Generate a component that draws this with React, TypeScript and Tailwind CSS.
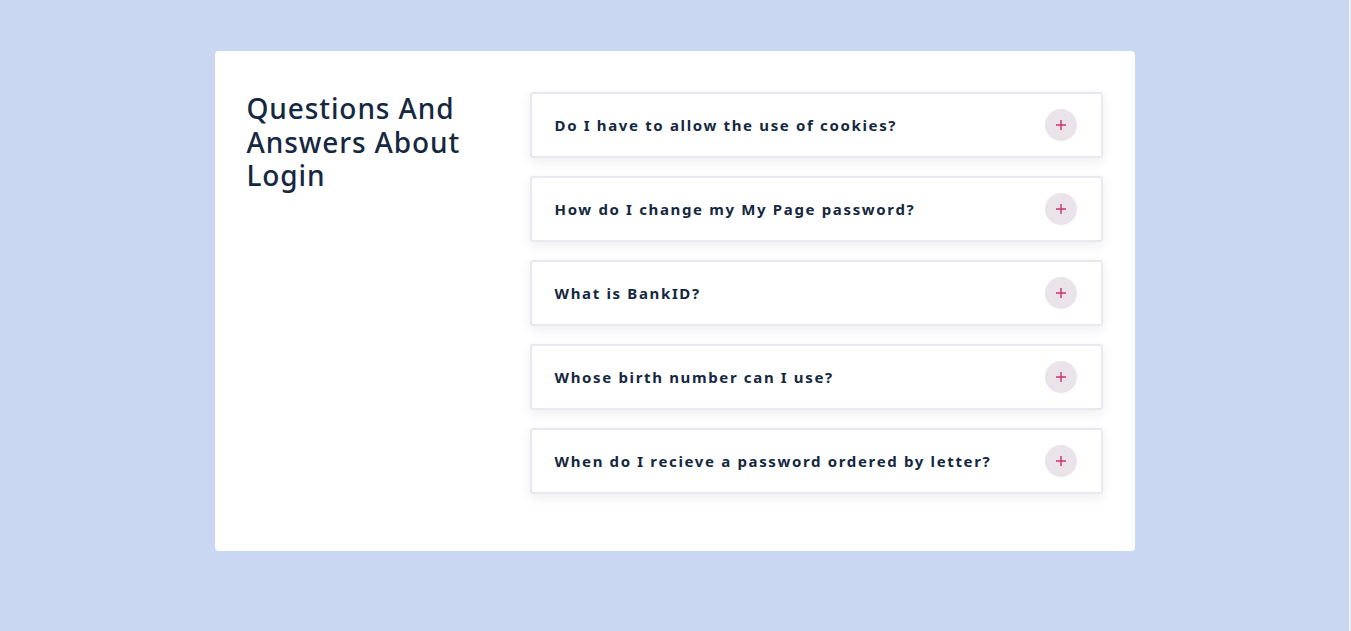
import React, { useState } from 'react'

const questions = [
  'Do I have to allow the use of cookies?',
  'How do I change my My Page password?',
  'What is BankID?',
  'Whose birth number can I use?',
  'When do I recieve a password ordered by letter?',
]

function Item({ q }: { q: string }) {
  const [open, setOpen] = useState(false)
  return (
    <div className="rounded-[3px] border-2 border-[#ebe7ee] bg-white shadow-[0_4px_12px_rgba(40,30,60,0.08)]">
      <button
        onClick={() => setOpen(!open)}
        className="flex h-[62px] w-full items-center justify-between pl-[23px] pr-[24px] text-left"
      >
        <span className="text-[15px] font-bold tracking-[1.65px] text-[#152841]">{q}</span>
        <span className="flex h-8 w-8 items-center justify-center rounded-full bg-[#ebe3ea]">
          <svg width="12" height="12" viewBox="0 0 12 12">
            <path d="M6 1v10M1 6h10" stroke="#c8346b" strokeWidth="1.4" />
          </svg>
        </span>
      </button>
    </div>
  )
}

export default function App() {
  return (
    <div className="flex min-h-screen w-full bg-[#cad7f3] font-['Noto_Sans',sans-serif]">
      <div className="flex-1 pt-[51px]">
        <div className="mx-auto flex h-[500px] w-[920px] rounded-[4px] bg-white pl-8 pr-[32px] pt-[41px]">
          <div className="w-[283px] shrink-0">
            <h1 className="max-w-[250px] text-[28px] font-medium leading-[33.5px] tracking-[0.9px] text-[#152841]">
              Questions And Answers About Login
            </h1>
          </div>
          <div className="flex flex-1 flex-col gap-[18px]">
            {questions.map(q => (
              <Item key={q} q={q} />
            ))}
          </div>
        </div>
      </div>
      <div className="w-[2px] bg-[#eef1f8]" />
    </div>
  )
}
